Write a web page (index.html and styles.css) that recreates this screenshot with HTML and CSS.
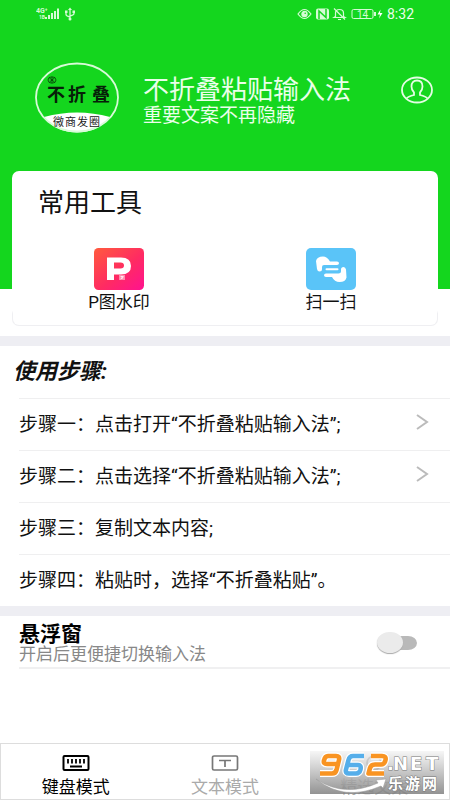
FILE: index.html
```html
<!DOCTYPE html>
<html lang="zh-CN">
<head>
<meta charset="utf-8">
<meta name="viewport" content="width=device-width, initial-scale=1">
<title>不折叠粘贴输入法</title>
<link rel="stylesheet" href="styles.css">
</head>
<body>
<header class="hero">
  <div class="status">
    <svg width="40" height="14" viewBox="0 0 40 14" fill="#d5fbd5" aria-hidden="true">
      <text x="0" y="6" class="tiny">4G⁺</text>
      <text x="3" y="12" class="tiny small">1B</text>
      <path d="M9 10h2v2H9zM12 8h2v4h-2zM15 6h2v6h-2zM18 4h2v8h-2zM21 1.500h2v10.500h-2z"/>
      <g fill="none" stroke="#d5fbd5" stroke-width="1.300"><path d="M34 2v10M30 5v2.500q0 1.500 4 2.500M38 4v2.500q0 1.500-4 2.500"/></g>
      <path d="M32 3l2-2.500L36 3zM29 3.500h2.500V6H29zM36.500 3.500H39V6h-2.500z"/><circle cx="34" cy="12" r="1.500"/>
    </svg>
    <div class="status-right">
      <svg width="86" height="14" viewBox="0 0 86 14" fill="none" stroke="#d5fbd5" stroke-width="1.200" aria-hidden="true">
        <path d="M1 7q6.500-9 13 0-6.500 9-13 0z"/><circle cx="7.500" cy="7" r="2.600" fill="#d5fbd5"/><circle cx="8.200" cy="6.200" r=".8" fill="#14d61e" stroke="none"/>
        <rect x="19" y="1.500" width="13" height="11" rx="2" fill="#d5fbd5" stroke="none"/>
        <path d="M22 12V4l7 6.500V2" stroke="#14d61e" stroke-width="1.500"/>
        <path d="M38.500 9.500V6q0-3.500 4-3.500T46.500 6v3.500l1.500 1H37zM41 12.500h3M37 1.500l11 11"/>
        <rect x="55" y="2.500" width="21" height="9" rx="1.500" stroke-width="1"/><path d="M78 5v4" stroke-width="2"/>
        <text x="60" y="10.500" class="battery">14</text>
        <path d="M83.500 2.500L80.500 7.500h2.500l-1 4 3.500-5.500h-2.500z" fill="#fff" stroke="none"/>
      </svg>
      <span class="clock">8:32</span>
    </div>
  </div>
  <div class="brand">
    <svg class="logo" width="86" height="72" viewBox="0 0 86 72" role="img" aria-label="不折叠 微商发圈">
      <path d="M10 55Q43 46 76 55Q64 70.500 43 70.500T10 55z" fill="#fff"/>
      <ellipse cx="43" cy="35.500" rx="41" ry="34" fill="none" stroke="#d8fbd8" stroke-width="1.800"/>
      <g fill="none" stroke="#063b08" stroke-width=".8"><ellipse cx="18" cy="18" rx="4" ry="3.200"/><path d="M15.500 16l5 4M15.500 20l5-4M18 15v6"/></g>
      <text x="13" y="39" class="logo-name">不</text><text x="34" y="39" class="logo-name">折</text><text x="58" y="39" class="logo-name">叠</text>
      <text x="19" y="64" class="logo-tag">微</text><text x="31" y="64" class="logo-tag">商</text><text x="43" y="64" class="logo-tag">发</text><text x="55" y="64" class="logo-tag">圈</text>
    </svg>
    <div class="brand-text">
      <h1>不折叠粘贴输入法</h1>
      <p>重要文案不再隐藏</p>
    </div>
    <button class="profile" type="button" aria-label="个人中心">
      <svg width="34" height="28" viewBox="0 0 34 28" fill="none" stroke="#e4fde4" stroke-width="1.800">
        <ellipse cx="17" cy="14" rx="15" ry="12.500"/>
        <path d="M6.500 22.500Q8 20.500 14 19V16.500Q11.500 14 11.500 10.500Q11.500 4.500 17 4.500T22.500 10.500Q22.500 14 20 16.500V19Q26 20.500 27.500 22.500"/>
      </svg>
    </button>
  </div>
</header>

<main>
  <section class="tools">
    <h2>常用工具</h2>
    <div class="tool-grid">
      <button class="tool" type="button">
        <svg width="50" height="42" viewBox="0 0 50 42" aria-hidden="true">
          <defs><linearGradient id="warm" x1="0" y1="0" x2="1" y2="1"><stop offset="0" stop-color="#ff5b3d"/><stop offset=".55" stop-color="#ff2b62"/><stop offset="1" stop-color="#ff1290"/></linearGradient></defs>
          <rect width="50" height="42" rx="4.500" fill="url(#warm)"/>
          <path fill="#fff" fill-rule="evenodd" d="M13 9.500h14q10 0 10 8.500t-10 8.500h-7v5.500h-7zM20 14.500v6h6.500q3.500 0 3.500-3t-3.500-3z"/>
          <rect x="25" y="27" width="6" height="5" fill="#ff8bac"/><path d="M26.500 28.500h3M28 28v3M26.500 31l3-2" stroke="#fff" stroke-width=".7"/>
        </svg>
        <span>P图水印</span>
      </button>
      <button class="tool" type="button">
        <svg width="50" height="42" viewBox="0 0 50 42" aria-hidden="true">
          <rect width="50" height="42" rx="5" fill="#5ac4f8"/>
          <path fill="#fff" d="M10 13Q11 8.500 17 8.500Q21 8.500 24 13.500H31Q33 13.500 33 15.200T31 17H18Q16 17 16 19V21Q16 23.500 13.500 23.500Q11.500 23.500 11 21zM40.500 29.500Q39.500 34 33.500 34Q28.500 34 26 29H20Q18 29 18 27.300T20 25.500H32.500Q35 25.500 35 23.500V21.500Q35 19 37.500 19Q39.500 19 40 21.500z"/>
          <path d="M20.500 21.300H31.500" stroke="#fff" stroke-width="2" stroke-linecap="round"/>
        </svg>
        <span>扫一扫</span>
      </button>
    </div>
  </section>

  <section class="band steps">
    <h2>使用步骤:</h2>
    <ol>
      <li><a href="#step1">步骤一：点击打开“不折叠粘贴输入法”;<svg width="14" height="22" viewBox="0 0 14 22" aria-hidden="true"><path d="M2 1l10 7-10 7"/></svg></a></li>
      <li><a href="#step2">步骤二：点击选择“不折叠粘贴输入法”;<svg width="14" height="22" viewBox="0 0 14 22" aria-hidden="true"><path d="M2 1l10 7-10 7"/></svg></a></li>
      <li>步骤三：复制文本内容;</li>
      <li>步骤四：粘贴时，选择“不折叠粘贴”。</li>
    </ol>
  </section>

  <section class="band">
    <div class="float-row">
      <label for="float">
        <strong>悬浮窗</strong>
        <span>开启后更便捷切换输入法</span>
      </label>
      <input id="float" class="switch" type="checkbox" role="switch">
    </div>
  </section>
</main>

<nav class="tabs">
  <button class="tab active" type="button">
    <svg width="28" height="18" viewBox="0 0 28 18" fill="none" stroke="currentColor" stroke-width="2" aria-hidden="true"><rect x="1.500" y="2" width="25" height="14" rx="1"/><path d="M6 5v4.500M10 5v4.500M14 5v4.500M18 5v4.500M22 5v4.500M8 12.500h12" stroke-width="1.800"/></svg>
    <span>键盘模式</span>
  </button>
  <button class="tab" type="button">
    <svg width="28" height="18" viewBox="0 0 28 18" fill="none" stroke="#777" stroke-width="1.700" aria-hidden="true"><rect x="1.500" y="2" width="25" height="14" rx="1.500"/><path d="M8 6.500h12M14 6.500v6.500"/></svg>
    <span>文本模式</span>
  </button>
  <button class="tab" type="button">
    <svg width="28" height="18" viewBox="0 0 28 18" fill="none" stroke="#777" stroke-width="1.700" aria-hidden="true"><circle cx="14" cy="9" r="7"/></svg>
    <span>精选文案</span>
  </button>
  <svg class="watermark" width="134" height="43" viewBox="0 0 134 43" role="img" aria-label="962.NET 乐游网">
    <defs><linearGradient id="plate" x1="0" y1="0" x2="0" y2="1"><stop offset="0" stop-color="#f4f4f4" stop-opacity=".8"/><stop offset=".5" stop-color="#bcbcbc" stop-opacity=".85"/><stop offset="1" stop-color="#808080" stop-opacity=".85"/></linearGradient></defs>
    <rect width="134" height="43" fill="url(#plate)"/>
    <path d="M6 28Q34 47 68 32L66 29L76 28L73 37L71 35Q34 51 6 28z" fill="#fff" stroke="#999" stroke-width=".5"/>
    <g fill="none" stroke-linejoin="round">
      <g stroke="#fff" stroke-width="7"><path d="M28 13H17Q13 13 14 9.500Q15 5 18 5H26Q30 5 29 9L26.500 19Q25.500 22.500 22 22.500H10"/><path d="M54 5H43Q39.500 5 38.500 9L36 18.500Q35 22.500 39 22.500H46Q49.500 22.500 50.500 18.500Q51.500 14 48 14H38"/><path d="M61 5H72Q76.500 5 75.500 9Q74.500 13.500 71 13.500H65Q61 13.500 60 17L58.500 22.500H74"/></g>
      <path d="M28 13H17Q13 13 14 9.500Q15 5 18 5H26Q30 5 29 9L26.500 19Q25.500 22.500 22 22.500H10" stroke="#f99422" stroke-width="4.600"/>
      <path d="M54 5H43Q39.500 5 38.500 9L36 18.500Q35 22.500 39 22.500H46Q49.500 22.500 50.500 18.500Q51.500 14 48 14H38" stroke="#55aeea" stroke-width="4.600"/>
      <path d="M61 5H72Q76.500 5 75.500 9Q74.500 13.500 71 13.500H65Q61 13.500 60 17L58.500 22.500H74" stroke="#f99422" stroke-width="4.600"/>
    </g>
    <text x="77" y="19" class="mark-net">.</text><text x="83" y="19" class="mark-net">N</text><text x="100" y="19" class="mark-net">E</text><text x="116" y="19" class="mark-net">T</text>
    <text x="78" y="38" class="mark-name">乐</text><text x="95" y="38" class="mark-name">游</text><text x="112" y="38" class="mark-name">网</text>
  </svg>
</nav>
</body>
</html>
```
FILE: styles.css
```css
* { box-sizing: border-box; }

body {
  margin: 0;
  min-height: 100vh;
  display: flex;
  flex-direction: column;
  background: #fff;
  color: #111;
  font-family: Roboto, "Noto Sans CJK SC", sans-serif;
}

h1, h2, p, ol { margin: 0; padding: 0; font-weight: 400; }
button { border: 0; padding: 0; background: none; color: inherit; font: inherit; }
svg { display: block; flex: none; }

.hero {
  background: #14d61e;
  color: #eaffea;
  padding-bottom: 118px;
}

.status {
  height: 28px;
  padding: 0 36px;
  display: flex;
  align-items: center;
  justify-content: space-between;
}

.status-right { display: flex; align-items: center; gap: 4px; }
.clock { font-size: 14px; line-height: 28px; }
.tiny { font: 700 7px Roboto, sans-serif; }
.small { font-size: 5px; }
.battery { font: 10px Roboto, sans-serif; fill: #d5fbd5; stroke: none; }

.brand {
  height: 143px;
  padding: 34px 16px 0 34px;
  display: flex;
  align-items: flex-start;
}

.brand-text { flex: 1; margin: 12px 0 0 23px; }
.brand h1 { font-size: 26px; line-height: 32px; }
.brand p { font-size: 19px; line-height: 20px; }
.profile { margin-top: 14px; }

.logo-name { font: 700 18px "Noto Sans CJK SC", sans-serif; fill: #062008; }
.logo-tag { font: 11px "Noto Sans CJK SC", sans-serif; fill: #222; }

.tools {
  margin: -118px 12px 10px;
  padding: 13px 0 11px;
  border: 1px solid transparent;
  border-radius: 7px;
  background:
    linear-gradient(#fff, #fff) padding-box,
    linear-gradient(#fff 90%, #efeff2 92%) border-box;
}

.tools h2 { padding-left: 25px; font-size: 26px; line-height: 36px; }

.tool-grid {
  margin-top: 27px;
  display: grid;
  grid-template-columns: 1fr 1fr;
}

.tool {
  display: flex;
  flex-direction: column;
  align-items: center;
  font-size: 17px;
  line-height: 24px;
}

.band { border-top: 10px solid #eeeef3; }

.steps h2 {
  padding-left: 13px;
  font-size: 22px;
  font-style: italic;
  font-weight: 700;
  line-height: 52px;
}

.steps ol { list-style: none; }

.steps li {
  margin-left: 19px;
  padding-top: 1px;
  border-top: 1px solid #efeff0;
  font-size: 19px;
  line-height: 50px;
  white-space: nowrap;
}

.steps a {
  padding-right: 21px;
  display: flex;
  align-items: center;
  justify-content: space-between;
  color: inherit;
  text-decoration: none;
}

.steps a svg { fill: none; stroke: #bbb; stroke-width: 2; }

.float-row {
  height: 53px;
  margin-left: 19px;
  padding: 2px 33px 0 0;
  display: flex;
  align-items: center;
  justify-content: space-between;
  border-bottom: 2px solid #f0f0f1;
}

.float-row strong,
.float-row label span { display: block; }
.float-row strong { font-size: 21px; line-height: 22px; color: #000; }
.float-row label span { font-size: 17px; line-height: 18px; color: #888; }

.switch {
  appearance: none;
  margin: 0;
  width: 40px;
  height: 22px;
  display: grid;
  align-items: center;
}

.switch::before,
.switch::after { content: ""; grid-area: 1 / 1; }

.switch::before {
  height: 14px;
  margin-left: 12px;
  border-radius: 9px / 7px;
  background: #b9b9b9;
}

.switch::after {
  width: 26px;
  height: 21px;
  border-radius: 50%;
  background: #ebebeb;
  box-shadow: 0 1px 1px #aaa;
}

.switch:checked::before { margin: 0 12px 0 0; background: #8fe594; }
.switch:checked::after { justify-self: end; background: #14d61e; }

.tabs {
  position: relative;
  margin-top: auto;
  display: grid;
  grid-template-columns: repeat(3, 1fr);
  border: 1px solid #ddd;
}

.tab {
  padding-top: 10px;
  display: flex;
  flex-direction: column;
  align-items: center;
  gap: 3px;
  color: #aaa;
  font-size: 17px;
  line-height: 24px;
}

.tab.active { color: #000; }

.watermark { position: absolute; right: 5px; bottom: 5px; }
.mark-net { font: 700 18px "DejaVu Sans", sans-serif; fill: #fff; stroke: #777; stroke-width: 1px; paint-order: stroke; }
.mark-name { font: 700 15px "Noto Sans CJK SC", sans-serif; fill: #fff; stroke: #777; stroke-width: 1px; paint-order: stroke; }
```
